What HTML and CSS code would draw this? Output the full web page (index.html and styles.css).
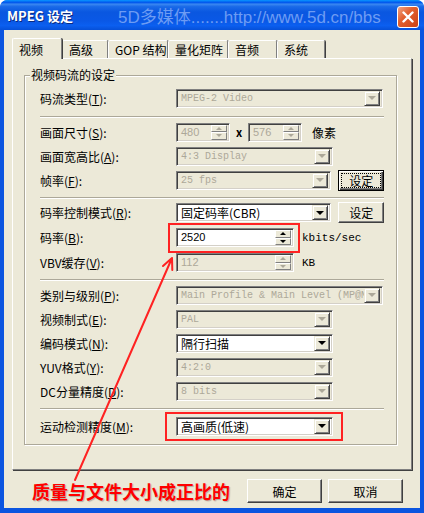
FILE: index.html
```html
<!DOCTYPE html>
<html lang="zh-CN">
<head>
  <meta charset="UTF-8" />
  <title>MPEG 设定</title>
  <link rel="stylesheet" href="styles.css">
</head>
<body>

  <div class="window">
    <div class="titlebar">
      <span class="title">MPEG 设定</span>
      <span class="watermark">5D多媒体.......http://www.5d.cn/bbs</span>
      <span class="close">
        <svg width="12" height="12" viewBox="0 0 12 12"><path d="M1.5 1.5 L10.5 10.5 M10.5 1.5 L1.5 10.5" stroke="#fff" stroke-width="2.4" stroke-linecap="round"/></svg>
      </span>
    </div>

    <div class="client">
      <div class="tabs">
        <div class="tab active">视频</div>
        <div class="tab w46">高级</div>
        <div class="tab w60">GOP 结构</div>
        <div class="tab w60">量化矩阵</div>
        <div class="tab w49">音频</div>
        <div class="tab w48">系统</div>
      </div>

      <div class="panel">
        <div class="group">
          <span class="legend">视频码流的设定</span>

          <div class="row">
            <label>码流类型(<u>T</u>):</label>
            <div class="combo wide disabled"><span class="val lat">MPEG-2 Video</span><i class="drop"></i></div>
          </div>
          <div class="sep s1"></div>

          <div class="row">
            <label>画面尺寸(<u>S</u>):</label>
            <div class="spin size disabled"><span class="val">480</span><span class="arrows"><i class="up"></i><i class="down"></i></span></div>
            <span class="times">x</span>
            <div class="spin size disabled"><span class="val">576</span><span class="arrows"><i class="up"></i><i class="down"></i></span></div>
            <span class="unit px">像素</span>
          </div>
          <div class="row">
            <label>画面宽高比(<u>A</u>):</label>
            <div class="combo disabled"><span class="val lat">4:3 Display</span><i class="drop"></i></div>
          </div>
          <div class="row">
            <label>帧率(<u>F</u>):</label>
            <div class="combo disabled"><span class="val lat">25 fps</span><i class="drop"></i></div>
            <button class="btn small focus"><span>设定</span></button>
          </div>
          <div class="sep s2"></div>

          <div class="row tall">
            <label>码率控制模式(<u>R</u>):</label>
            <div class="combo"><span class="val">固定码率(CBR)</span><i class="drop"></i></div>
            <button class="btn small"><span>设定</span></button>
          </div>
          <div class="row tall">
            <label>码率(<u>B</u>):</label>
            <div class="spin rate"><span class="val">2520</span><span class="arrows"><i class="up"></i><i class="down"></i></span></div>
            <span class="unit lat">kbits/sec</span>
          </div>
          <div class="row tall">
            <label>VBV缓存(<u>V</u>):</label>
            <div class="spin rate disabled"><span class="val">112</span><span class="arrows"><i class="up"></i><i class="down"></i></span></div>
            <span class="unit lat">KB</span>
          </div>
          <div class="sep s3"></div>

          <div class="row">
            <label>类别与级别(<u>P</u>):</label>
            <div class="combo wide disabled"><span class="val lat">Main Profile &amp; Main Level (MP@M</span><i class="drop"></i></div>
          </div>
          <div class="row">
            <label>视频制式(<u>E</u>):</label>
            <div class="combo disabled"><span class="val lat">PAL</span><i class="drop"></i></div>
          </div>
          <div class="row">
            <label>编码模式(<u>N</u>):</label>
            <div class="combo"><span class="val">隔行扫描</span><i class="drop"></i></div>
          </div>
          <div class="row">
            <label>YUV格式(<u>Y</u>):</label>
            <div class="combo disabled"><span class="val lat">4:2:0</span><i class="drop"></i></div>
          </div>
          <div class="row">
            <label>DC分量精度(<u>D</u>):</label>
            <div class="combo disabled"><span class="val lat">8 bits</span><i class="drop"></i></div>
          </div>
          <div class="sep s4"></div>

          <div class="row">
            <label>运动检测精度(<u>M</u>):</label>
            <div class="combo"><span class="val">高画质(低速)</span><i class="drop"></i></div>
          </div>
        </div>
      </div>

      <div class="footer">
        <span class="note">质量与文件大小成正比的</span>
        <button class="btn big">确定</button>
        <button class="btn big">取消</button>
      </div>
    </div>

    <!-- annotations drawn over the dialog -->
    <div class="mark mark-rate"></div>
    <div class="mark mark-motion"></div>
    <svg class="arrow" width="424" height="513" viewBox="0 0 424 513">
      <path d="M75 480 L172 258 M172 258 L163 266 M172 258 L172.3 270" stroke="#f22" stroke-width="2" fill="none" stroke-linecap="round"/>
    </svg>
  </div>

</body>
</html>
```

FILE: styles.css
```css
* {
  box-sizing: border-box;
  margin: 0;
  padding: 0;
}

body {
  width: 424px;
  height: 513px;
  overflow: hidden;
  background: #fff;
  font-family: "Noto Sans CJK SC", sans-serif;
  font-size: 12px;
  color: #000;
}

u {
  text-decoration: underline;
}

.window {
  position: relative;
  width: 424px;
  height: 513px;
  display: flex;
  flex-direction: column;
  background: #0b55e0;
  border-radius: 8px 8px 0 0;
}

.titlebar {
  height: 30px;
  display: flex;
  align-items: center;
  padding: 0 5px 0 7px;
  border-radius: 7px 7px 0 0;
  background: linear-gradient(#0997ff 0%, #0058ee 8%, #3a87f0 14%, #1a6ae8 22%, #0a57e0 40%, #0a58e6 70%, #0b5ff0 85%, #0650d8 100%);
}

.title {
  width: 111px;
  color: #fff;
  font-weight: bold;
  font-size: 13px;
  text-shadow: 1px 1px #0a2a80;
}

.watermark {
  flex: 1;
  color: #6d9cf3;
  font-family: "Liberation Sans", "Noto Sans CJK SC", sans-serif;
  font-size: 17px;
  white-space: nowrap;
}

.close {
  width: 22px;
  height: 22px;
  margin-top: 4px;
  border: 1px solid #fff;
  border-radius: 3px;
  background: linear-gradient(135deg, #f2a483 0%, #e2602f 40%, #cc4214 100%);
  display: flex;
  align-items: center;
  justify-content: center;
}

.client {
  flex: 1;
  margin: 0 4px 5px;
  background: #ece9d8;
  padding: 10px 8px 0 8px;
  display: flex;
  flex-direction: column;
}

/* tabs */
.tabs {
  display: flex;
  align-items: flex-start;
  height: 18px;
}

.tab {
  height: 18px;
  padding: 1px 0 0 6px;
  border: 1px solid #fff;
  border-right-color: #808080;
  border-bottom: none;
  border-radius: 2px 2px 0 0;
  box-shadow: 1px 0 0 #404040;
  line-height: 16px;
  white-space: nowrap;
}

.tab.active {
  position: relative;
  z-index: 1;
  width: 50px;
  height: 21px;
  margin-top: -2px;
  padding-top: 3px;
  background: #ece9d8;
}

.w46 { width: 46px; }
.w60 { width: 60px; }
.w49 { width: 49px; }
.w48 { width: 48px; }

.panel {
  height: 412px;
  padding: 16px 14px 0 11px;
  border: 1px solid #fff;
  border-right-color: #808080;
  border-bottom-color: #808080;
  box-shadow: 1px 1px 0 #404040;
}

.group {
  position: relative;
  padding: 10px 12px 6px 15px;
  border: 1px solid #aca899;
  box-shadow: inset 1px 1px #fff, 1px 1px #fff;
}

.legend {
  position: absolute;
  top: -8px;
  left: 5px;
  padding: 0 1px;
  line-height: 14px;
  background: #ece9d8;
}

.row {
  display: flex;
  align-items: center;
  height: 24px;
}

.row.tall {
  height: 25px;
}

.row label {
  width: 136px;
  flex-shrink: 0;
  white-space: nowrap;
}

.sep {
  height: 2px;
  border-top: 1px solid #aca899;
  border-bottom: 1px solid #fff;
}

.s1 { margin: 6px 0 2px; }
.s2 { margin: 5px 0 1px; }
.s3 { margin: 4px 0 2px; }
.s4 { margin: 5px 0 4px; }

/* sunken fields */
.combo,
.spin {
  display: flex;
  align-items: center;
  height: 19px;
  padding: 2px;
  border: 1px solid;
  border-color: #808080 #fff #fff #808080;
  box-shadow: inset 1px 1px #404040, inset -1px -1px #d4d0c8;
  background: #fff;
}

.combo { width: 157px; }
.combo.wide { width: 207px; }

.combo.disabled,
.spin.disabled {
  background: #ece9d8;
  color: #aca899;
}

.val {
  flex: 1;
  padding-left: 2px;
  overflow: hidden;
  white-space: nowrap;
  line-height: 15px;
}

.lat {
  font-family: "Liberation Mono", monospace;
  font-size: 10px;
}

.spin .val {
  font-family: "Liberation Sans", sans-serif;
  font-size: 11px;
}

.drop {
  width: 16px;
  height: 15px;
  flex-shrink: 0;
  display: flex;
  align-items: center;
  justify-content: center;
  border: 1px solid;
  border-color: #ece9d8 #404040 #404040 #ece9d8;
  box-shadow: inset 1px 1px #fff, inset -1px -1px #808080;
  background: #ece9d8;
}

.drop::after {
  content: "";
  border-top: 4px solid #000;
  border-left: 4px solid transparent;
  border-right: 4px solid transparent;
}

.disabled .drop::after {
  border-top-color: #aca899;
}

.spin.size { width: 54px; }
.spin.rate { width: 118px; }

.arrows {
  width: 16px;
  height: 15px;
  flex-shrink: 0;
  display: flex;
  flex-direction: column;
}

.arrows i {
  flex: 1;
  display: flex;
  align-items: center;
  justify-content: center;
  border: 1px solid;
  border-color: #fff #808080 #808080 #fff;
  background: #ece9d8;
}

.arrows .up::after {
  content: "";
  border-bottom: 3px solid #000;
  border-left: 3px solid transparent;
  border-right: 3px solid transparent;
}

.arrows .down::after {
  content: "";
  border-top: 3px solid #000;
  border-left: 3px solid transparent;
  border-right: 3px solid transparent;
}

.disabled .arrows .up::after { border-bottom-color: #aca899; }
.disabled .arrows .down::after { border-top-color: #aca899; }

.times {
  width: 18px;
  text-align: center;
  font-weight: bold;
  font-size: 11px;
}

.unit {
  margin-left: 8px;
  white-space: nowrap;
}

.unit.lat {
  font-size: 11px;
}

.unit.px {
  margin-left: 10px;
}

/* buttons */
.btn {
  background: #ece9d8;
  border: 1px solid;
  border-color: #fff #404040 #404040 #fff;
  box-shadow: inset -1px -1px #808080;
  font-family: "Noto Sans CJK SC", sans-serif;
  font-size: 12px;
  color: #000;
}

.btn.small {
  width: 46px;
  height: 21px;
  margin-left: 7px;
}

.btn.focus {
  border: 1px solid #000;
  box-shadow: inset 1px 1px #fff, inset -1px -1px #404040, inset -2px -2px #808080;
  padding: 2px;
}

.btn.focus span {
  display: block;
  height: 100%;
  line-height: 13px;
  border: 1px dotted #000;
}

.footer {
  display: flex;
  align-items: center;
  gap: 6px;
  height: 38px;
  padding: 4px 9px 0 20px;
}

.note {
  flex: 1;
  color: #f00;
  font-weight: bold;
  font-size: 18px;
  text-shadow: 1px 1px 1px rgba(0, 0, 0, 0.25);
  white-space: nowrap;
}

.btn.big {
  width: 75px;
  height: 24px;
}

/* red annotation overlays */
.mark {
  position: absolute;
  border: 2px solid #f22;
}

.mark-rate {
  left: 168px;
  top: 223px;
  width: 132px;
  height: 30px;
}

.mark-motion {
  left: 165px;
  top: 412px;
  width: 178px;
  height: 29px;
}

.arrow {
  position: absolute;
  left: 0;
  top: 0;
  pointer-events: none;
}
```
